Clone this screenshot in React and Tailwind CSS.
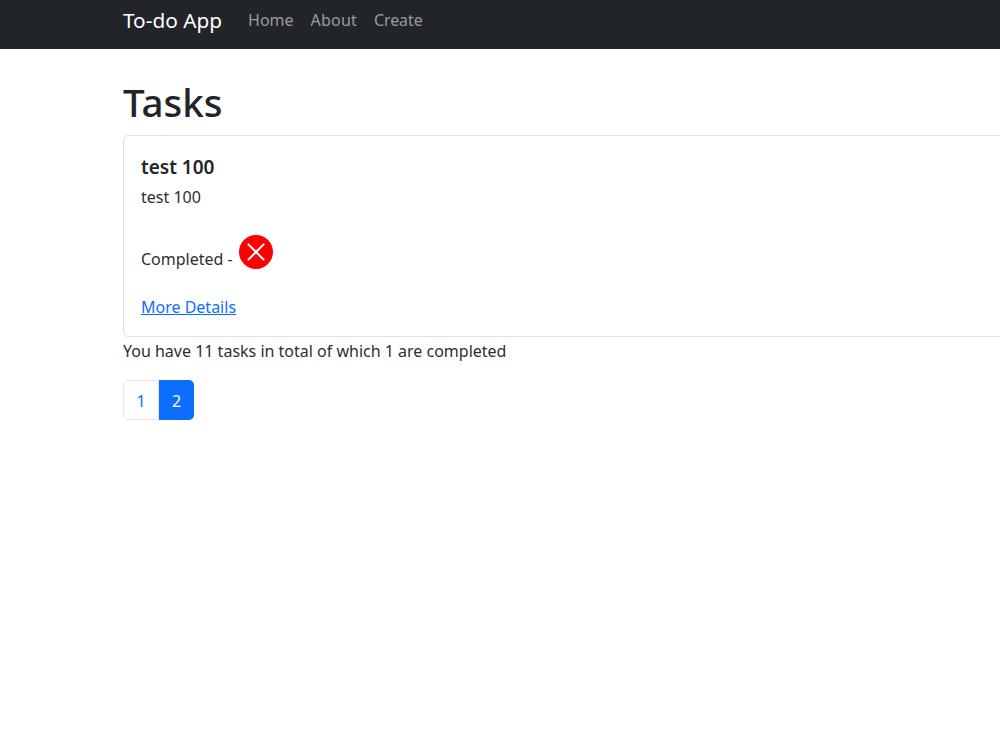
export default function App() {
  return (
    <div className="min-h-[750px] bg-white overflow-hidden font-['Noto_Sans','Open_Sans',sans-serif] text-[#2b2f33] text-base">
      <nav className="h-[49px] bg-[#212529] pl-[123px] flex items-start">
        <a className="text-[20.8px] leading-[30px] mt-[5px] text-white mr-[26px]">To-do App</a>
        <div className="flex gap-[17px] mt-[8px] text-[rgba(255,255,255,0.55)] leading-6">
          <a>Home</a>
          <a className="tracking-[0.2px]">About</a>
          <a className="tracking-[-0.1px]">Create</a>
        </div>
      </nav>
      <main className="pl-[123px] w-[1123px]">
        <h1 className="text-[38.5px] font-[550] leading-[48px] mt-[29px] mb-[9px] text-[#212529]">Tasks</h1>
        <div className="border border-[#e0e0e0] rounded-[5px] px-[17px] pt-[17px] h-[202px]">
          <h5 className="text-[19px] font-semibold leading-6 mt-[2px] mb-[6px] text-[#212529]">test 100</h5>
          <p className="leading-6">test 100</p>
          <p className="leading-6 mt-[26px] flex items-end h-[36px]">
            <span className="mr-[5px]">Completed -</span>
            <svg width="36" height="36" viewBox="0 0 36 36" className="mb-[1px]">
              <circle cx="18" cy="18" r="17" fill="#ff0000" />
              <path d="M10.5 10.5 L25.5 25.5 M25.5 10.5 L10.5 25.5" stroke="#fff" strokeWidth="2" strokeLinecap="round" />
            </svg>
          </p>
          <a className="block mt-[24px] leading-6 text-[#0d6efd] underline">More Details</a>
        </div>
        <p className="leading-6 mt-[2px] mb-[17px]">You have 11 tasks in total of which 1 are completed</p>
        <ul className="flex">
          <li className="w-[36px] h-[40px] pt-[1px] flex items-center justify-center border border-[#e4e7ea] rounded-l-[5px] text-[#0d6efd]">1</li>
          <li className="w-[35px] h-[40px] pt-[1px] flex items-center justify-center bg-[#0d6efd] rounded-r-[5px] text-white">2</li>
        </ul>
      </main>
    </div>
  );
}
